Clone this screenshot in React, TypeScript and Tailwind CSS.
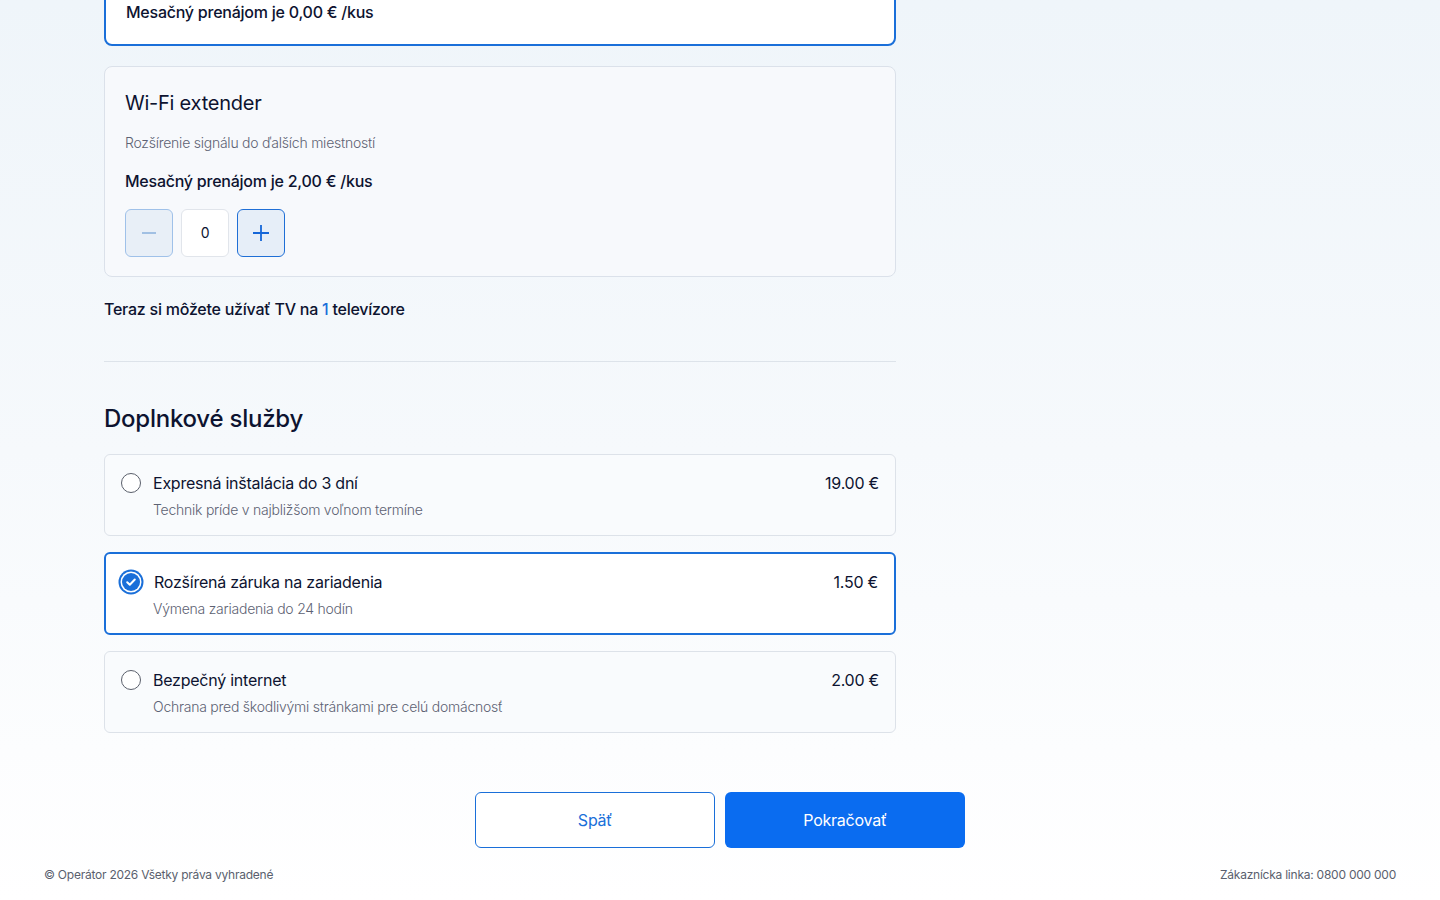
import React from "react";

const font = { fontFamily: "Inter, 'Noto Sans', sans-serif" };

const options = [
  { title: "Expresná inštalácia do 3 dní", sub: "Technik príde v najbližšom voľnom termíne", price: "19.00 €", on: false },
  { title: "Rozšírená záruka na zariadenia", sub: "Výmena zariadenia do 24 hodín", price: "1.50 €", on: true },
  { title: "Bezpečný internet", sub: "Ochrana pred škodlivými stránkami pre celú domácnosť", price: "2.00 €", on: false },
];

const CheckIcon = () => (
  <svg width="26" height="26" viewBox="0 0 26 26" className="-my-[3px] -ml-[3px] -mr-[2px] shrink-0">
    <circle cx="13" cy="13" r="12.5" fill="#1a6fd9" />
    <circle cx="13" cy="13" r="10.5" fill="#fff" />
    <circle cx="13" cy="13" r="9" fill="#1a6fd9" />
    <path d="M9.2 13.2l2.6 2.5 5-5.2" fill="none" stroke="#fff" strokeWidth="2" strokeLinecap="round" strokeLinejoin="round" />
  </svg>
);

const App = () => {
  return (
    <div className="min-h-[900px] bg-gradient-to-b from-[#eff5fa] via-[#f6f9fc] to-white text-[#0d1330] overflow-hidden tracking-[-0.015em]" style={font}>
      <div className="w-[1232px] mx-auto">
        <div className="w-[792px] flex flex-col">
          {/* previous device card (scrolled) */}
          <div className="-mt-[22px] bg-white border-2 border-[#1a6fd9] rounded-lg px-5 pt-5 pb-5">
            <p className="text-base leading-6 font-medium">Mesačný prenájom je 0,00 € /kus</p>
          </div>

          <div className="mt-5 bg-[#f7f9fc] border border-[#dbe1ea] rounded-lg px-5 pt-[22px] pb-[19px]">
            <h3 className="text-xl leading-7 font-normal">Wi-Fi extender</h3>
            <p className="mt-4 text-sm leading-5 text-[#5d6273] font-light">Rozšírenie signálu do ďalších miestností</p>
            <p className="mt-4 text-base leading-6 font-medium">Mesačný prenájom je 2,00 € /kus</p>
            <div className="mt-4 flex gap-2">
              <button className="w-12 h-12 rounded-md bg-[#e8eff7] border border-[#9fc1e9] flex items-center justify-center">
                <svg width="18" height="18" viewBox="0 0 18 18"><path d="M2 9h14" stroke="#8fb4de" strokeWidth="1.6" /></svg>
              </button>
              <div className="w-12 h-12 rounded-md bg-white border border-[#e1e5eb] flex items-center justify-center text-sm">0</div>
              <button className="w-12 h-12 rounded-md bg-[#e6eef8] border border-[#1f6fd6] flex items-center justify-center">
                <svg width="20" height="20" viewBox="0 0 20 20"><path d="M2 10h16M10 2v16" stroke="#1566d8" strokeWidth="1.8" /></svg>
              </button>
            </div>
          </div>

          <p className="mt-5 text-base leading-6 font-medium">
            Teraz si môžete užívať TV na <span className="text-[#1a6fd9]">1</span> televízore
          </p>

          <div className="mt-10 h-px bg-[#dde3ea]" />

          <h2 className="mt-[41px] text-2xl leading-8 font-medium">Doplnkové služby</h2>

          <div className="mt-[19px] flex flex-col gap-[16px]">
            {options.map((o) => (
              <div
                key={o.title}
                className={
                  o.on
                    ? "bg-white border-2 border-[#1a6fd9] rounded-md pl-[15px] pr-4 pt-4 pb-[14px] flex justify-between"
                    : "bg-[#f9fbfd] border border-[#dde2e9] rounded-md px-4 pt-4 pb-[15px] flex justify-between"
                }
              >
                <div className="flex flex-col">
                  <div className="flex items-center gap-3 h-6">
                    {o.on ? <CheckIcon /> : <span className="w-5 h-5 rounded-full border-[1.5px] border-[#5a5f6b] bg-white shrink-0" />}
                    <span className="text-base leading-6 font-normal">{o.title}</span>
                  </div>
                  <p className="mt-[5px] pl-8 text-sm leading-5 text-[#5d6273] font-light">{o.sub}</p>
                </div>
                <span className="text-base leading-6 font-normal">{o.price}</span>
              </div>
            ))}
          </div>
        </div>
      </div>

      <div className="mt-[59px] flex justify-center gap-[10px]">
        <button className="w-[240px] h-14 rounded-md border border-[#1a6fd9] bg-white text-[#1a6fd9] text-base">Späť</button>
        <button className="w-[240px] h-14 rounded-md bg-[#0a6cf0] text-white text-base">Pokračovať</button>
      </div>

      <footer className="mt-[19px] px-11 flex justify-between text-xs leading-4 text-[#5a5f6e]">
        <span>© Operátor 2026 Všetky práva vyhradené</span>
        <span>Zákaznícka linka: 0800 000 000</span>
      </footer>
    </div>
  );
};

export default App;
